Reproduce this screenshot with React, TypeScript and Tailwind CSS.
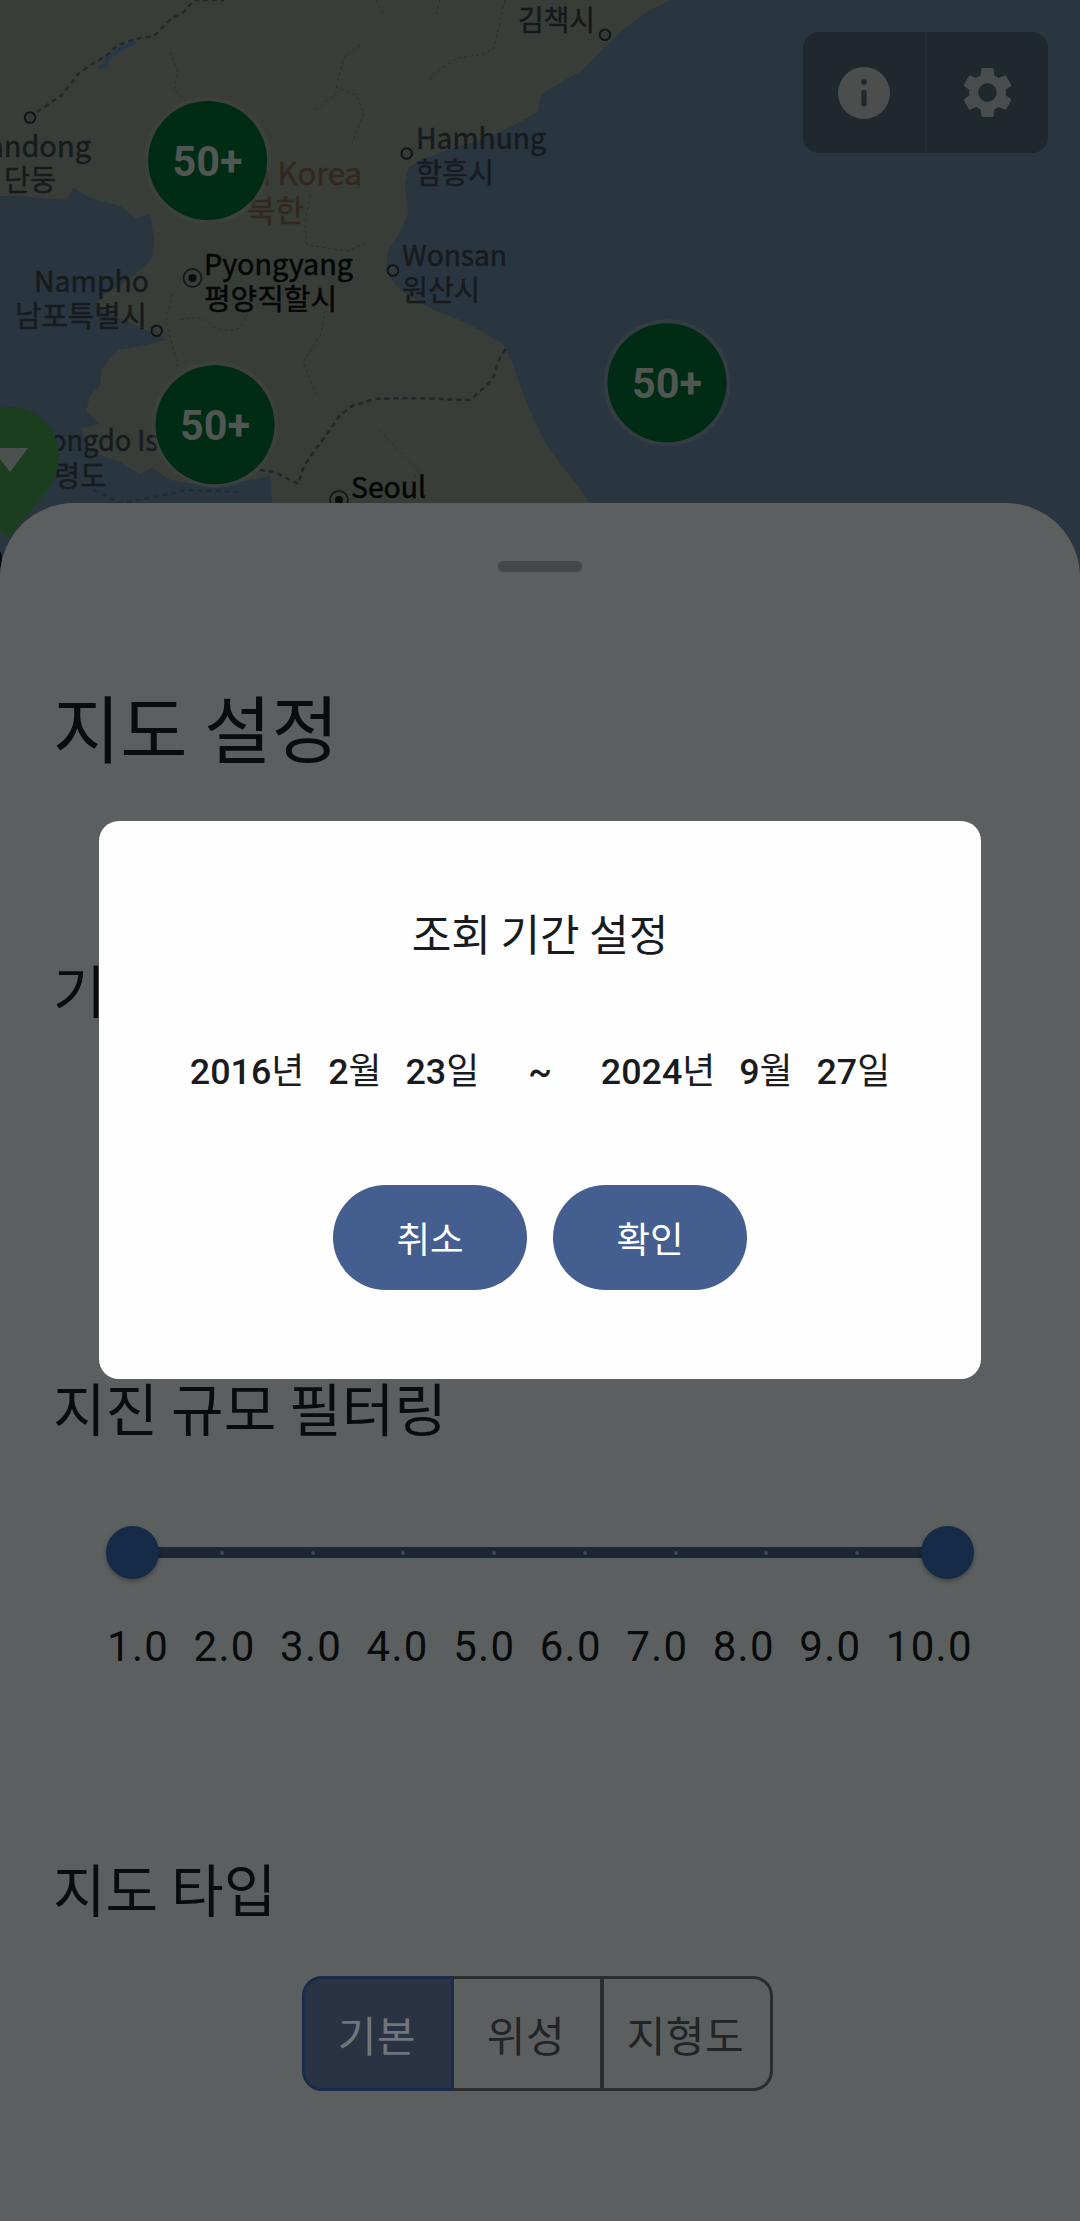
import type { ReactNode } from "react";
import { MdSettings } from "react-icons/md";

const LABEL_FONT = "'Noto Sans CJK KR', sans-serif";

type Label = { t: string; x: number; y: number; w?: number; s?: number; c?: string; end?: boolean };

const labels: Label[] = [
  { t: "김책시", x: 518, y: 31, w: 77, c: "#15191b" },
  { t: "andong", x: 91, y: 157, end: true },
  { t: "단둥", x: 4, y: 191, w: 52 },
  { t: "h Korea", x: 362, y: 185, s: 31, c: "#33281f", end: true },
  { t: "북한", x: 247, y: 222, w: 57, s: 31, c: "#33281f" },
  { t: "Hamhung", x: 416, y: 149, w: 130 },
  { t: "함흥시", x: 416, y: 184, w: 78 },
  { t: "Pyongyang", x: 204, y: 275, w: 149, c: "#050606" },
  { t: "평양직할시", x: 204, y: 310, w: 133, c: "#050606" },
  { t: "Nampho", x: 34, y: 292, w: 115 },
  { t: "남포특별시", x: 15, y: 327, w: 132 },
  { t: "Wonsan", x: 402, y: 266, w: 105 },
  { t: "원산시", x: 402, y: 301, w: 78 },
  { t: "ongdo Is", x: 50, y: 451, w: 108 },
  { t: "령도", x: 54, y: 487, w: 52 },
  { t: "Seoul", x: 351, y: 498, w: 75, c: "#050606" },
];

const towns = [
  [30, 117.5],
  [605, 34.7],
  [406.7, 153.5],
  [156.7, 330.7],
  [393, 270.5],
];

const clusters = [
  [207.6, 160.5],
  [215, 424.7],
  [667, 382.7],
];

function MapView() {
  return (
    <svg className="absolute inset-0" width="1080" height="600" viewBox="0 0 1080 600">
      <rect width="1080" height="600" fill="#29353f" />
      <path
        fill="#383d38"
        d="M0 0H670L650 10 625 28 600 52 580 72 558 84 541 94 538 112 520 122 505 130 480 140 448 150 420 160 408 168 405 185 408 215 398 236 388 250 386 272 400 290 430 308 460 320 480 330 503 344 512 362 520 385 532 415 545 442 562 466 577 485 590 503V520H200V497L215 488 195 484 170 480 152 468 140 474 120 462 92 452 80 428 100 424 86 412 90 395 100 386 102 368 118 350 150 344 166 340 150 332 120 318 96 306 100 296 120 286 140 270 152 258 154 240 150 214 135 218 120 206 90 198 74 188 66 200 40 198 20 196 0 196Z"
      />
      <path fill="#29353f" d="M200 490L270 476 272 503H180Z" />
      <g fill="none" stroke="#2b302e" strokeWidth="1" strokeDasharray="3 3">
        <path d="M170 52L178 72 174 90 190 105M440 0l-5 18M360 45l-16 12-8 30M336 87l20 8 8 18-12 30M316 110l26-22M376 0l8 15M505 0l-3 12-8 36-10 6-26 4-22 14-8 10" />
        <path d="M310 195l-5 30 2 20 40 6 18-8M172 294l-6 28 12 44M180 320q20-6 30 4t30 4l8-14M325 310l-4 24-18 28 14 34M380 430l18 20 20 20-8 15" />
      </g>
      <g fill="none" strokeWidth="2.5" strokeDasharray="5 4">
        <path stroke="#232a2e" d="M37 112L62 95 78 74 92 64 106 56 118 45 140 38 154 36 172 18 184 12 194 0H224" />
        <path stroke="#20282c" d="M260 470L275 472 298 484 304 466 315 450 330 430 340 415 352 406 375 399 410 398 470 400 488 384 494 376 498 362 506 348" />
        <path stroke="#232d37" d="M94 490L120 503 160 496 185 490 240 492" />
      </g>
      <path fill="none" stroke="#27374a" strokeWidth="4" d="M98 68L106 66 108 58 122 48 136 42" />

      {labels.map((l) => (
        <text
          key={l.t}
          x={l.x}
          y={l.y}
          textAnchor={l.end ? "end" : "start"}
          textLength={l.w}
          lengthAdjust="spacingAndGlyphs"
          fontFamily={LABEL_FONT}
          fontSize={l.s ?? 29}
          fill={l.c ?? "#171b1d"}
          stroke={l.c ?? "#171b1d"}
          strokeWidth="0.5"
        >
          {l.t}
        </text>
      ))}
      {towns.map(([x, y]) => (
        <circle key={x} cx={x} cy={y} r="5.3" fill="#353a38" stroke="#121517" strokeWidth="2" />
      ))}
      {[
        [192.5, 278],
        [339, 500],
      ].map(([x, y]) => (
        <g key={x}>
          <circle cx={x} cy={y} r="9" fill="#383d3a" stroke="#161918" strokeWidth="1.8" />
          <circle cx={x} cy={y} r="4" fill="#0b0d0d" />
        </g>
      ))}

      <path fill="#1b3f1e" d="M10 407A49 49 0 0 1 59 456C59 490 30 505 10 538L0 532V408Q5 407 10 407Z" />
      <path fill="#4b5150" d="M0 448H28L10 472 0 459Z" />
      <text x="-14" y="567" fontFamily={LABEL_FONT} fontSize="29" fill="#050606" stroke="#050606">n</text>

      {clusters.map(([x, y]) => (
        <g key={x}>
          <circle cx={x} cy={y} r="63.5" fill="#464a48" opacity="0.35" />
          <circle cx={x} cy={y} r="59.5" fill="#002b14" />
          <text x={x} y={y + 15.5} textAnchor="middle" fontFamily="Roboto, sans-serif" fontSize="42" textLength="70" lengthAdjust="spacingAndGlyphs" fontWeight="700" fill="#505652">
            50+
          </text>
        </g>
      ))}
    </svg>
  );
}

function Toolbar() {
  return (
    <div className="absolute left-[803px] top-8 flex h-[121px] w-[245px] divide-x-2 divide-[#232d33] overflow-hidden rounded-2xl bg-[#1e282d]">
      <button className="flex flex-1 items-center justify-center">
        <svg width="54" height="54" viewBox="0 0 54 54">
          <circle cx="27" cy="27" r="26" fill="#4c4d4d" />
          <circle cx="27" cy="16" r="2.8" fill="#1f282c" />
          <rect x="24.3" y="24" width="5.4" height="16.5" rx="2.6" fill="#1f282c" />
        </svg>
      </button>
      <button className="flex flex-1 items-center justify-center">
        <MdSettings size={61} color="#4a4d4e" />
      </button>
    </div>
  );
}

function Heading({ children }: { children: ReactNode }) {
  return <h2 className="text-[57.2px] leading-[80px] whitespace-nowrap">{children}</h2>;
}

function Slider() {
  return (
    <div className="ml-[53px] mt-[80px] flex h-[53px] w-[868px] items-center">
      <span className="z-10 size-[53px] shrink-0 rounded-full bg-[#152b48] shadow-[0_2px_4px_rgba(0,0,0,0.3)]" />
      <div className="-mx-1 flex h-[11px] flex-1 items-center justify-between bg-[#1c2635] pr-[66px] pl-[65px]">
        {[2, 3, 4, 5, 6, 7, 8, 9].map((n) => (
          <i key={n} className="size-1 rounded-full bg-[#3e4b5b]" />
        ))}
      </div>
      <span className="z-10 size-[53px] shrink-0 rounded-full bg-[#152b48] shadow-[0_2px_4px_rgba(0,0,0,0.3)]" />
    </div>
  );
}

function Sheet() {
  return (
    <section className="relative mt-[503px] h-[1718px] rounded-t-[74px] bg-[#5c5f5f] px-[53px] text-[#090b0c]">
      <div className="flex justify-center pt-[58px]">
        <span className="h-[11px] w-[84px] rounded-full bg-[#464748]" />
      </div>
      <h1 className="mt-[101px] text-[73.2px] leading-[104px]">지도 설정</h1>
      <div className="mt-[171px]">
        <Heading>기간 설정</Heading>
      </div>
      <div className="mt-[338px]">
        <Heading>지진 규모 필터링</Heading>
      </div>
      <Slider />
      <div className="ml-[54px] mt-[42px] flex w-[866px] justify-between font-[Roboto,sans-serif] text-[42px] leading-[52px] tracking-[1.3px]">
        {["1.0", "2.0", "3.0", "4.0", "5.0", "6.0", "7.0", "8.0", "9.0", "10.0"].map((n) => (
          <span key={n}>{n}</span>
        ))}
      </div>
      <div className="mt-[174px]">
        <Heading>지도 타입</Heading>
      </div>
      <div className="ml-[249px] mt-[49px] flex h-[115px] w-[471px] text-[42px] tracking-[0.6px] text-[#222426]">
        <button className="w-[152px] rounded-l-[20px] border-[3px] border-[#1a2b49] bg-[#2a3343] pr-0.5 text-[#70767e]">기본</button>
        <button className="w-[146px] border-y-[3px] border-[#2a2c2d] pr-0.5">위성</button>
        <button className="w-[173px] rounded-r-[20px] border-[3px] border-l-4 border-[#2a2c2d] pr-[3px]">지형도</button>
      </div>
    </section>
  );
}

function DateText({ parts }: { parts: [string, string][] }) {
  return (
    <div className="flex gap-[24px]">
      {parts.map(([n, unit]) => (
        <span key={unit} className="whitespace-nowrap">
          <span className="font-medium">{n}</span>
          {unit}
        </span>
      ))}
    </div>
  );
}

function Dialog() {
  return (
    <div className="absolute left-[99px] top-[821px] flex h-[558px] w-[882px] flex-col items-center rounded-[20px] bg-[#fefefe] text-[#1a1b1e]">
      <h3 className="mt-[79px] text-[43px] leading-[64px]">조회 기간 설정</h3>
      <div className="mt-[82px] flex items-center font-[Roboto,'Noto_Sans_CJK_KR',sans-serif] text-[35.8px] leading-[52px]">
        <DateText parts={[["2016", "년"], ["2", "월"], ["23", "일"]]} />
        <span className="mx-[49px] font-medium">~</span>
        <DateText parts={[["2024", "년"], ["9", "월"], ["27", "일"]]} />
      </div>
      <div className="mt-[87px] flex gap-[26px] text-[36.5px] leading-[103px] text-white">
        <button className="h-[105px] w-[194px] rounded-full bg-[#445e8f]">취소</button>
        <button className="h-[105px] w-[194px] rounded-full bg-[#445e8f]">확인</button>
      </div>
    </div>
  );
}

export default function App() {
  return (
    <main className="relative flow-root h-[2221px] w-[1080px] overflow-hidden font-['Noto_Sans_CJK_KR',sans-serif]">
      <MapView />
      <Toolbar />
      <Sheet />
      <Dialog />
    </main>
  );
}
